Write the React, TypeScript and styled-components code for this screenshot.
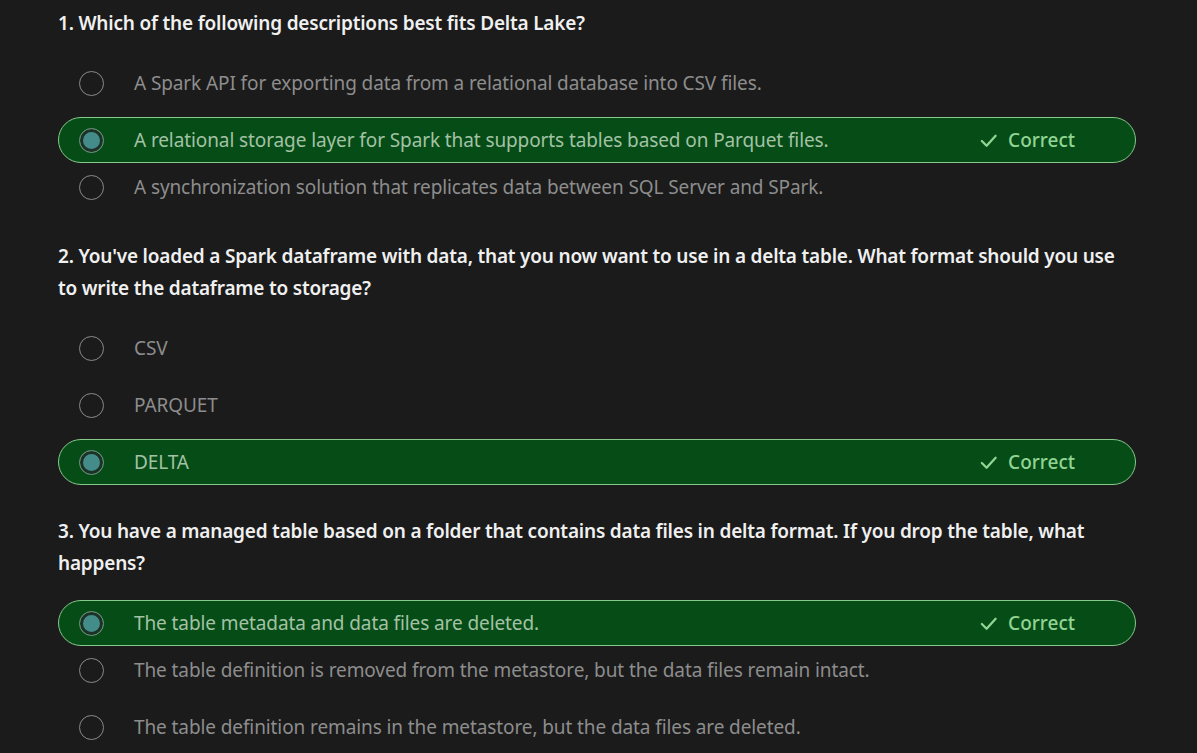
import React from "react";
import styled, { createGlobalStyle } from "styled-components";

const Global = createGlobalStyle`
  html, body { margin: 0; padding: 0; background: #1b1b1b; }
  body { font-family: "Noto Sans", "Open Sans", sans-serif; }
`;

const Page = styled.div`
  width: 1197px;
  height: 753px;
  overflow: hidden;
  background: #1b1b1b;
  box-sizing: border-box;
  padding: 7px 0 0 58px;
`;

const Section = styled.section`
  width: 1078px;
  margin-bottom: 30px;
`;

const Heading = styled.h2`
  margin: 0 0 21px 0;
  font-size: 19px;
  line-height: 32px;
  font-weight: 600;
  color: #f0f0f0;
  letter-spacing: -0.2px;
`;

const List = styled.div`
  display: flex;
  flex-direction: column;
`;

const Row = styled.div<{ $selected: boolean; $afterSelected: boolean; $first: boolean }>`
  display: flex;
  align-items: center;
  height: 46px;
  box-sizing: border-box;
  padding: 0 60px 0 20px;
  margin-top: ${(p) => (p.$first ? 0 : p.$afterSelected ? 1 : 11)}px;
  border-radius: 23px;
  border: 1px solid ${(p) => (p.$selected ? "#86c98a" : "transparent")};
  background: ${(p) => (p.$selected ? "#054c17" : "transparent")};
`;

const Radio = styled.span<{ $selected: boolean }>`
  flex: none;
  width: 25px;
  height: 25px;
  box-sizing: border-box;
  border-radius: 50%;
  border: ${(p) => (p.$selected ? "1px solid #6e8f78" : "1.5px solid #8a8a8a")};
  background: ${(p) => (p.$selected ? "#438c8a" : "transparent")};
  box-shadow: ${(p) => (p.$selected ? "inset 0 0 0 3px #1c3224" : "none")};
`;

const Label = styled.span<{ $selected: boolean }>`
  flex: 1;
  margin-left: 30px;
  font-size: 19px;
  letter-spacing: -0.1px;
  color: ${(p) => (p.$selected ? "#a3c2a4" : "#8d8d8d")};
  white-space: nowrap;
`;

const Badge = styled.span`
  display: flex;
  align-items: center;
  gap: 10px;
  font-size: 19px;
  font-weight: 500;
  color: #92d492;
`;

type Q = { title: string; options: string[]; correct: number };

const questions: Q[] = [
  {
    title: "1. Which of the following descriptions best fits Delta Lake?",
    options: [
      "A Spark API for exporting data from a relational database into CSV files.",
      "A relational storage layer for Spark that supports tables based on Parquet files.",
      "A synchronization solution that replicates data between SQL Server and SPark.",
    ],
    correct: 1,
  },
  {
    title:
      "2. You've loaded a Spark dataframe with data, that you now want to use in a delta table. What format should you use to write the dataframe to storage?",
    options: ["CSV", "PARQUET", "DELTA"],
    correct: 2,
  },
  {
    title:
      "3. You have a managed table based on a folder that contains data files in delta format. If you drop the table, what happens?",
    options: [
      "The table metadata and data files are deleted.",
      "The table definition is removed from the metastore, but the data files remain intact.",
      "The table definition remains in the metastore, but the data files are deleted.",
    ],
    correct: 0,
  },
];

const Check = () => (
  <svg width="19" height="19" viewBox="0 0 20 20" fill="none">
    <path d="M3 10.5 L8 15.5 L17.5 5" stroke="#92d492" strokeWidth="2.4" strokeLinecap="round" strokeLinejoin="round" />
  </svg>
);

export default function App() {
  return (
    <>
      <Global />
      <Page>
        {questions.map((q) => (
          <Section key={q.title}>
            <Heading>{q.title}</Heading>
            <List>
              {q.options.map((o, i) => {
                const sel = i === q.correct;
                return (
                  <Row key={o} $selected={sel} $afterSelected={i - 1 === q.correct} $first={i === 0}>
                    <Radio $selected={sel} />
                    <Label $selected={sel}>{o}</Label>
                    {sel && (
                      <Badge>
                        <Check />
                        Correct
                      </Badge>
                    )}
                  </Row>
                );
              })}
            </List>
          </Section>
        ))}
      </Page>
    </>
  );
}
